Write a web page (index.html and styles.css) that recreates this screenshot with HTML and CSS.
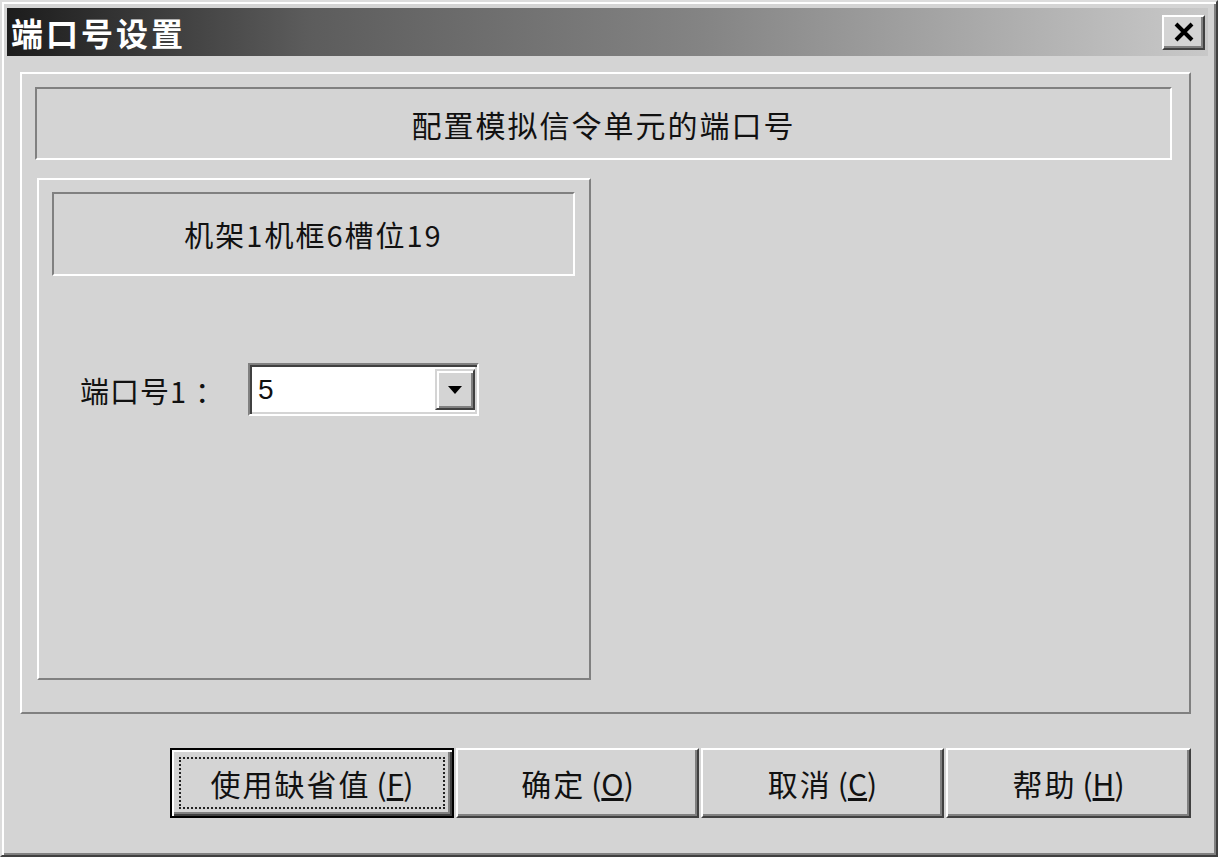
FILE: index.html
```html
<!DOCTYPE html>
<html lang="zh-CN">
<head>
    <meta charset="UTF-8">
    <title>端口号设置</title>
    <link rel="stylesheet" href="styles.css">
</head>
<body>
    <div class="window">
        <div class="titlebar">
            <span class="title">端口号设置</span>
            <div class="close">
                <svg width="22" height="20" viewBox="0 0 22 20">
                    <path d="M3 2 L19 18 M19 2 L3 18" stroke="#000" stroke-width="4" fill="none"/>
                </svg>
            </div>
        </div>

        <div class="content">
            <div class="group">
                <div class="sunken header">配置模拟信令单元的端口号</div>

                <div class="panel">
                    <div class="sunken subheader">机架1机框6槽位19</div>
                    <div class="row">
                        <span class="label">端口号1<span class="colon">：</span></span>
                        <div class="combo">
                            <span class="value">5</span>
                            <div class="drop">
                                <svg width="16" height="10" viewBox="0 0 16 10">
                                    <path d="M1 1 L15 1 L8 9 Z" fill="#000"/>
                                </svg>
                            </div>
                        </div>
                    </div>
                </div>
            </div>

            <div class="buttons">
                <div class="button default"><span class="focus">使用缺省值<span class="acc">(<u>F</u>)</span></span></div>
                <div class="button">确定<span class="acc">(<u>O</u>)</span></div>
                <div class="button">取消<span class="acc">(<u>C</u>)</span></div>
                <div class="button wide">帮助<span class="acc">(<u>H</u>)</span></div>
            </div>
        </div>
    </div>
</body>
</html>
```

FILE: styles.css
```css
body {
    margin: 0;
    background: #d4d4d4;
    font-family: "Noto Sans CJK SC", "Liberation Sans", sans-serif;
    color: #111;
}
.window {
    width: 1218px;
    height: 857px;
    box-sizing: border-box;
    background: #d4d4d4;
    border: 2px solid;
    border-color: #dcdcdc #404040 #404040 #dcdcdc;
    box-shadow: inset 2px 2px #fff, inset -2px -2px #808080;
    padding: 6px 8px 0 5px;
}
.titlebar {
    height: 48px;
    display: flex;
    align-items: center;
    justify-content: space-between;
    background: linear-gradient(to right, #1c1c1c, #5c5c5c 25%, #848484 58%, #c4c4c4 97%, #c8c8c8);
}
.title {
    color: #fff;
    font-size: 32px;
    font-weight: bold;
    letter-spacing: 3px;
    padding-left: 4px;
    line-height: 1;
}
.close {
    width: 43px;
    height: 35px;
    box-sizing: border-box;
    margin-right: 3px;
    background: #d4d4d4;
    border: 2px solid;
    border-color: #fff #404040 #404040 #fff;
    box-shadow: inset -2px -2px #808080;
    display: flex;
    align-items: center;
    justify-content: center;
}
.content {
    padding: 16px 0 0 13px;
}
.group {
    width: 1171px;
    height: 642px;
    box-sizing: border-box;
    border: 2px solid;
    border-color: #fff #808080 #808080 #fff;
    padding: 13px 17px 13px 13px;
}
.sunken {
    box-sizing: border-box;
    border: 2px solid;
    border-color: #808080 #fff #fff #808080;
    display: flex;
    align-items: center;
    justify-content: center;
    font-size: 30px;
    letter-spacing: 2px;
}
.header {
    height: 73px;
}
.panel {
    width: 554px;
    height: 502px;
    box-sizing: border-box;
    margin: 18px 0 0 2px;
    border: 2px solid;
    border-color: #fff #808080 #808080 #fff;
    padding: 12px 14px 12px 13px;
}
.subheader {
    height: 84px;
    font-size: 29px;
    letter-spacing: 2px;
}
.row {
    display: flex;
    align-items: center;
    margin-top: 87px;
    padding-left: 28px;
}
.label {
    width: 168px;
    font-size: 29px;
    letter-spacing: 1px;
}
.colon {
    margin-left: 8px;
}
.combo {
    width: 231px;
    height: 53px;
    box-sizing: border-box;
    background: #fff;
    border: 2px solid;
    border-color: #808080 #fff #fff #808080;
    box-shadow: inset 2px 2px #404040, inset -2px -2px #d4d4d4;
    display: flex;
    align-items: center;
    justify-content: space-between;
    padding: 4px 2px 4px 8px;
}
.value {
    font-size: 28px;
    font-family: "Liberation Sans", sans-serif;
}
.drop {
    width: 40px;
    height: 41px;
    box-sizing: border-box;
    background: #d4d4d4;
    border: 2px solid;
    border-color: #d4d4d4 #404040 #404040 #d4d4d4;
    box-shadow: inset 2px 2px #fff, inset -2px -2px #808080;
    display: flex;
    align-items: center;
    justify-content: center;
}
.buttons {
    display: flex;
    gap: 2px;
    margin: 34px 0 0 150px;
}
.button {
    width: 243px;
    height: 70px;
    box-sizing: border-box;
    border: 2px solid;
    border-color: #fff #404040 #404040 #fff;
    box-shadow: inset -2px -2px #808080;
    display: flex;
    align-items: center;
    justify-content: center;
    font-size: 30px;
    letter-spacing: 2px;
}
.button.wide {
    width: 245px;
}
.button.default {
    width: 284px;
    border: 2px solid #000;
    box-shadow: inset 2px 2px #fff, inset -2px -2px #404040, inset -4px -4px #808080;
    padding: 7px;
}
.focus {
    flex: 1;
    align-self: stretch;
    display: flex;
    align-items: center;
    justify-content: center;
    border: 2px dotted #222;
}
.acc {
    margin-left: 6px;
    letter-spacing: 0;
}
```
